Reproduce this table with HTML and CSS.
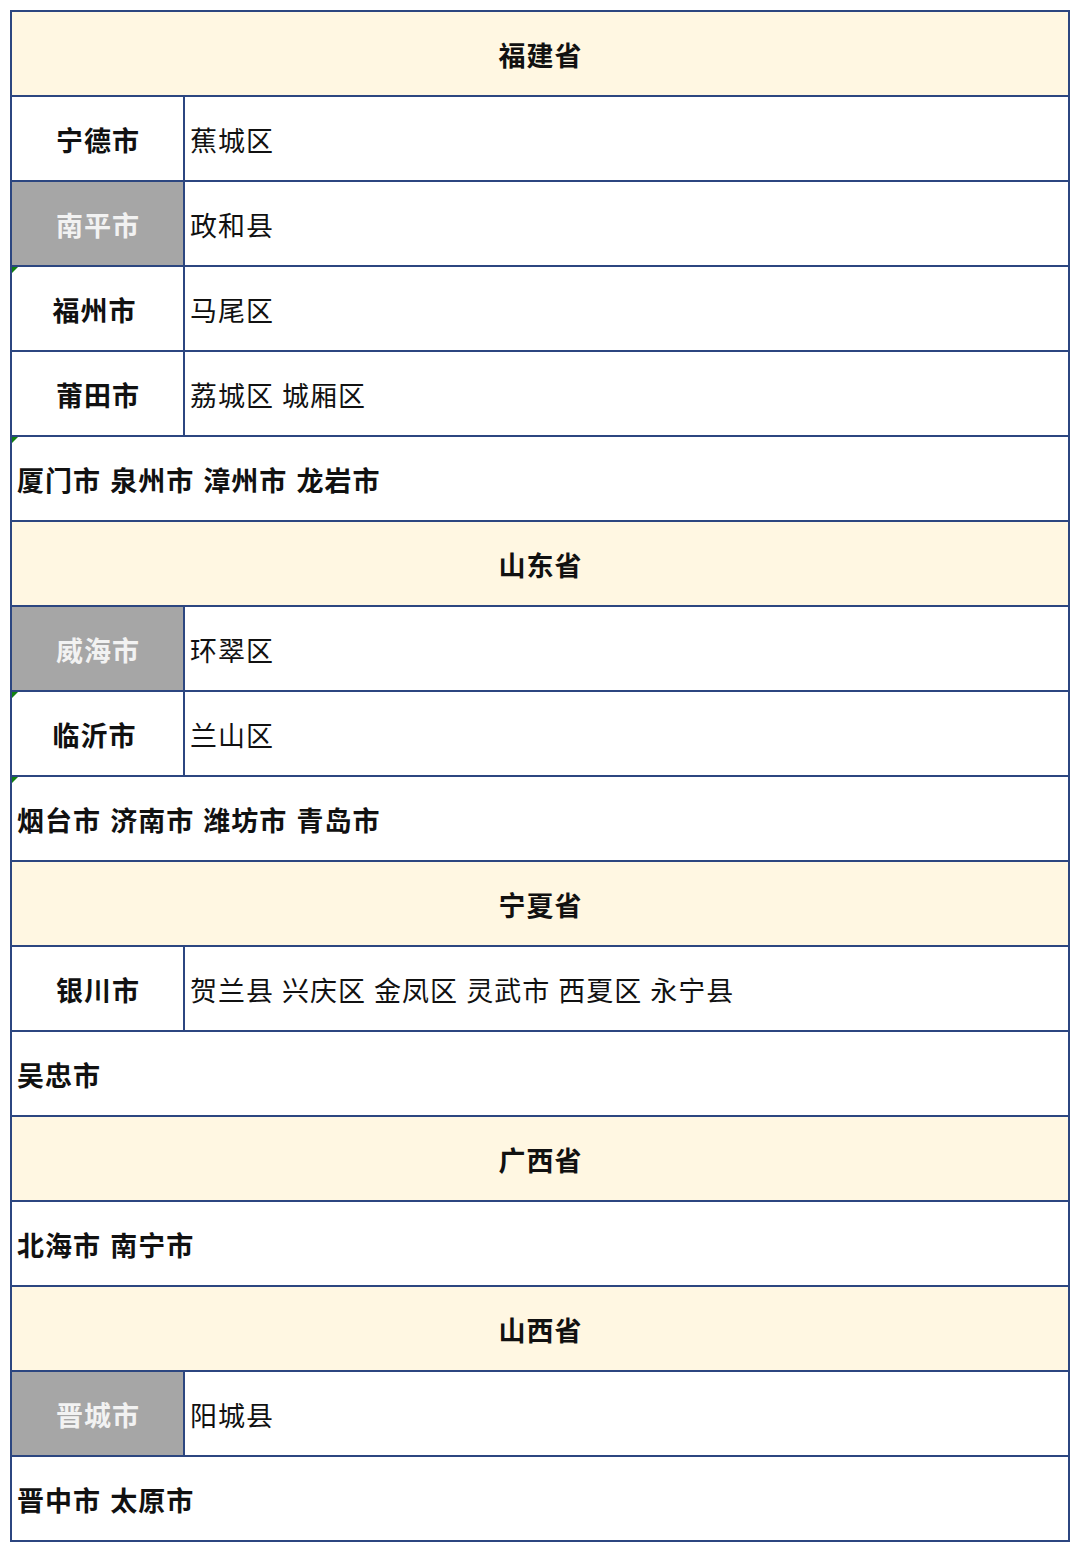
FILE: index.html
```html
<!DOCTYPE html>
<html lang="zh-CN">
<head>
<meta charset="utf-8">
<title>省市区表</title>
<link rel="stylesheet" href="styles.css">
</head>
<body>
<div class="sheet">
  <div class="row head"><div class="cell">福建省</div></div>
  <div class="row"><div class="city">宁德市</div><div class="area">蕉城区</div></div>
  <div class="row"><div class="city grey">南平市</div><div class="area">政和县</div></div>
  <div class="row flag"><div class="city">福州市&nbsp;</div><div class="area">马尾区</div></div>
  <div class="row"><div class="city">莆田市</div><div class="area">荔城区 城厢区</div></div>
  <div class="row full flag"><div class="cell">厦门市 泉州市 漳州市 龙岩市</div></div>

  <div class="row head"><div class="cell">山东省</div></div>
  <div class="row"><div class="city grey">威海市</div><div class="area">环翠区</div></div>
  <div class="row flag"><div class="city">临沂市&nbsp;</div><div class="area">兰山区</div></div>
  <div class="row full flag"><div class="cell">烟台市 济南市 潍坊市 青岛市</div></div>

  <div class="row head"><div class="cell">宁夏省</div></div>
  <div class="row"><div class="city">银川市</div><div class="area">贺兰县 兴庆区 金凤区 灵武市 西夏区 永宁县</div></div>
  <div class="row full"><div class="cell">吴忠市</div></div>

  <div class="row head"><div class="cell">广西省</div></div>
  <div class="row full"><div class="cell">北海市 南宁市</div></div>

  <div class="row head"><div class="cell">山西省</div></div>
  <div class="row"><div class="city grey">晋城市</div><div class="area">阳城县</div></div>
  <div class="row full"><div class="cell">晋中市 太原市</div></div>
</div>
</body>
</html>
```

FILE: styles.css
```css
html, body {
  margin: 0;
  padding: 0;
  background: #ffffff;
}

body {
  font-family: "Noto Sans CJK SC", "Noto Sans", sans-serif;
  color: #111111;
}

.sheet {
  margin: 10px 0 0 10px;
  width: 1056px;
  border: 2px solid #2c4680;
  display: flex;
  flex-direction: column;
}

.row {
  position: relative;
  display: flex;
  height: 83px;
  border-bottom: 2px solid #2c4680;
}

.row:last-child {
  border-bottom: none;
}

.row.flag::before {
  content: "";
  position: absolute;
  left: 0;
  top: 0;
  width: 0;
  height: 0;
  border-top: 6px solid #118011;
  border-right: 6px solid transparent;
}

.cell,
.city,
.area {
  display: flex;
  align-items: center;
  box-sizing: border-box;
  padding-top: 2px;
  font-size: 27px;
  line-height: 1;
  letter-spacing: 1px;
  white-space: pre;
}

.head {
  background: #fff7e2;
}

.head .cell {
  flex: 1;
  justify-content: center;
  padding-left: 1px;
  font-weight: 700;
  word-spacing: 2px;
}

.full .cell {
  flex: 1;
  padding-left: 5px;
  font-weight: 700;
  word-spacing: 2px;
}

.city {
  width: 173px;
  flex: none;
  justify-content: center;
  padding-left: 1px;
  font-weight: 700;
  border-right: 2px solid #2c4680;
  word-spacing: 0;
}

.city.grey {
  background: #a6a6a6;
  color: #f2f2f2;
}

.area {
  flex: 1;
  padding-left: 5px;
  font-weight: 400;
  word-spacing: 1px;
}
```
